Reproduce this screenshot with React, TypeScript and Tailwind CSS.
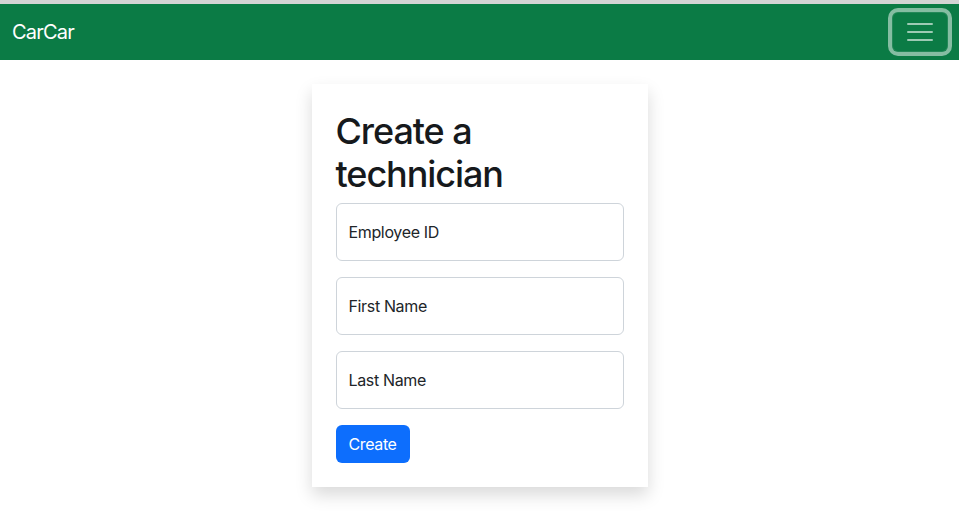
const fields = ["Employee ID", "First Name", "Last Name"];

const App = () => {
  return (
    <div className="min-h-screen bg-white font-['Inter','Liberation_Sans',sans-serif] tracking-[-0.022em] text-[#212529]">
      <div className="h-[4px] bg-[#d4d4d4]" />
      <nav className="flex h-[56px] items-center justify-between bg-[#0b7b45] pl-[12px] pr-[11px]">
        <span className="text-[20px] leading-none tracking-[-0.04em] text-white">CarCar</span>
        <button className="flex h-[40px] w-[56px] items-center justify-center rounded-[6px] border border-white/10 shadow-[0_0_0_4px_rgba(255,255,255,0.5)]">
          <svg width="30" height="30" viewBox="0 0 30 30">
            <path
              d="M3 7h24M3 15h24M3 23h24"
              stroke="rgba(255,255,255,0.6)"
              strokeWidth="2"
              strokeLinecap="round"
            />
          </svg>
        </button>
      </nav>
      <div className="flex justify-center pt-[24px]">
        <div className="w-[336px] bg-white p-[24px] shadow-[0_8px_16px_rgba(0,0,0,0.15)]">
          <h1 className="mb-[7px] pt-[2px] text-[36px] font-medium leading-[43px] tracking-[-0.03em] text-[#16191c]">
            Create a technician
          </h1>
          <form className="flex flex-col gap-[16px]" onSubmit={(e) => e.preventDefault()}>
            {fields.map((f) => (
              <div
                key={f}
                className="flex h-[58px] items-center rounded-[6px] border border-[#ced4da] px-[12px] text-[16px]"
              >
                {f}
              </div>
            ))}
            <div>
              <button className="h-[38px] w-[74px] rounded-[6px] bg-[#0d6efd] text-[16px] text-white">
                Create
              </button>
            </div>
          </form>
        </div>
      </div>
    </div>
  );
};

export default App;
